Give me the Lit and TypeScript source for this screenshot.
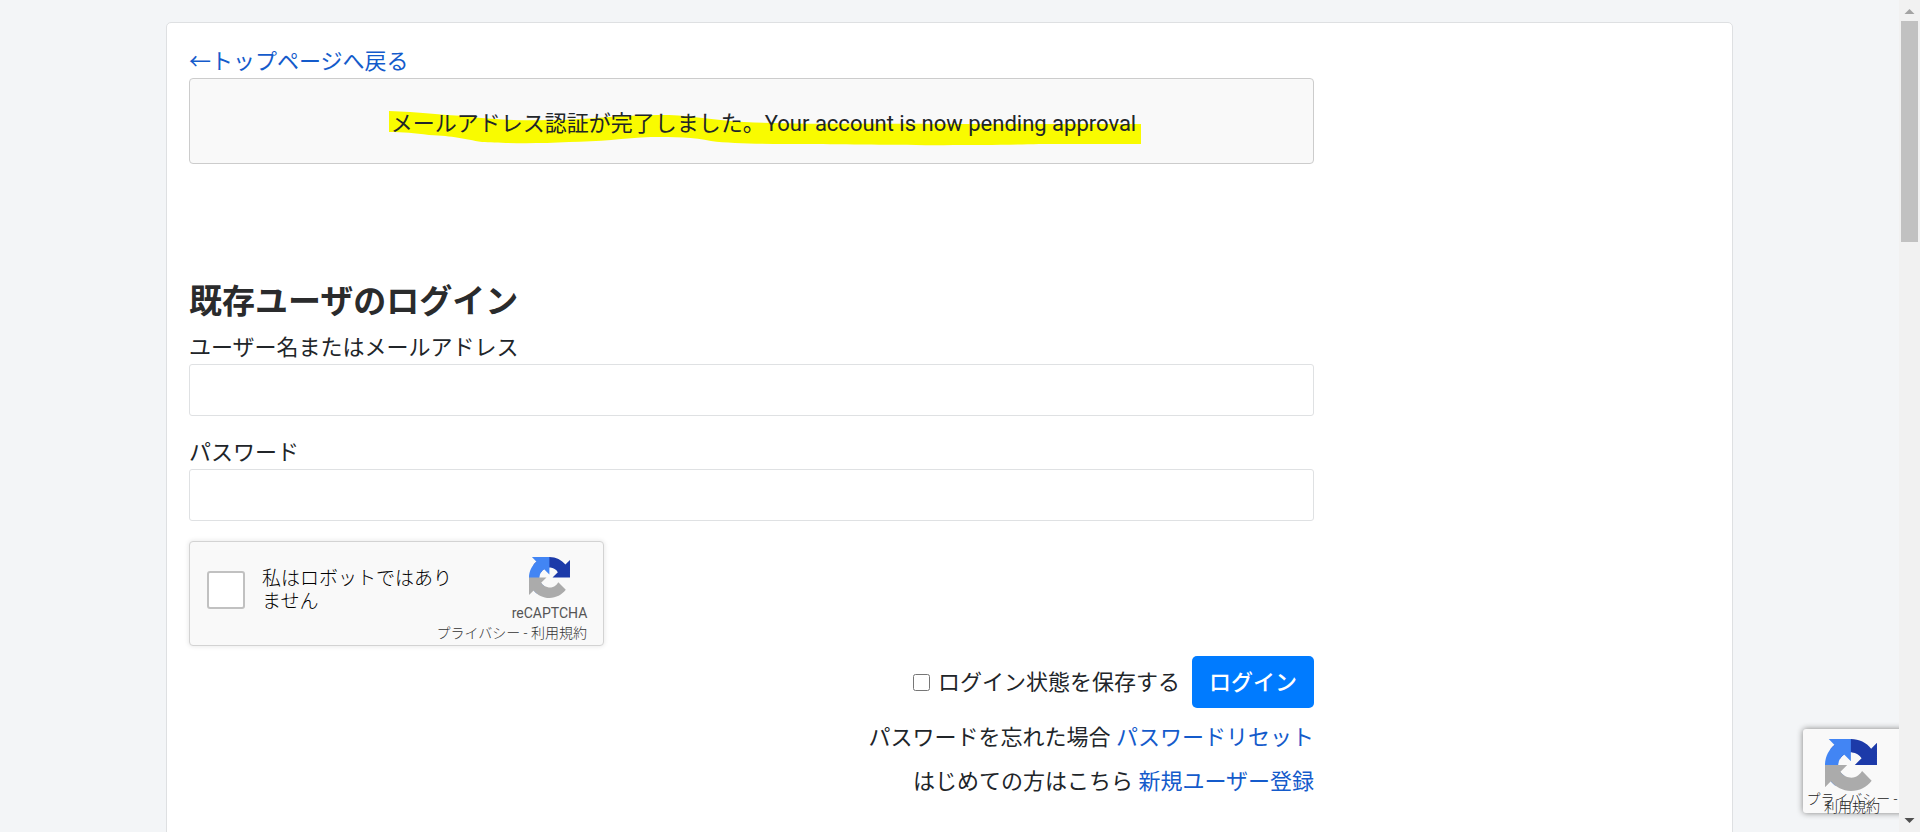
import { LitElement, html, css } from "lit";
import { customElement } from "lit/decorators.js";

@customElement("recaptcha-logo")
class RecaptchaLogo extends LitElement {
  static styles = css`
    :host { display: block; }
    svg { display: block; width: 100%; height: 100%; }
    .navy { fill: #1c3aa9; }
    .blue { fill: #4285f4; }
    .grey { fill: #ababab; }
  `;
  render() {
    return html`<svg viewBox="0 0 64 64" aria-hidden="true">
      <path class="navy" d="M64 31.955l-.033-1.37V4.687l-7.16 7.16C50.948 4.674 42.033.093 32.05.093c-10.4 0-19.622 4.96-25.458 12.64l11.736 11.86a15.55 15.55 0 0 1 4.754-5.334c2.05-1.6 4.952-2.906 8.968-2.906.485 0 .86.057 1.135.163 4.976.393 9.288 3.14 11.828 7.124l-8.307 8.307L64 31.953" />
      <path class="blue" d="M31.862.094l-1.37.033H4.594l7.16 7.16C4.58 13.147 0 22.06 0 32.046c0 10.4 4.96 19.622 12.64 25.458L24.5 45.768a15.55 15.55 0 0 1-5.334-4.754c-1.6-2.05-2.906-4.952-2.906-8.968 0-.485.057-.86.163-1.135.393-4.976 3.14-9.288 7.124-11.828l8.307 8.307L31.86.095" />
      <path class="grey" d="M.001 32.045l.033 1.37v25.898l7.16-7.16c5.86 7.173 14.774 11.754 24.76 11.754 10.392 0 19.622-4.96 25.458-12.64l-11.736-11.86a15.55 15.55 0 0 1-4.754 5.334c-2.05 1.6-4.952 2.906-8.968 2.906-.485 0-.86-.057-1.135-.163-4.976-.393-9.288-3.14-11.828-7.124l8.307-8.307c-10.522.04-22.4.066-27.295-.005" />
    </svg>`;
  }
}

@customElement("app-root")
class AppRoot extends LitElement {
  static styles = css`
    :host {
      display: block;
      box-sizing: border-box;
      height: 100vh;
      padding-bottom: 3px;
      overflow: hidden;
      background: #fff;
      font: 22px/33px Roboto, "Noto Sans CJK JP", sans-serif;
      color: #212529;
    }
    *, *::before, *::after { box-sizing: border-box; }
    .window { display: grid; grid-template-columns: 1fr 21px; height: 100%; }
    .page { position: relative; overflow: hidden; background: #f3f5f7; padding: 22px 166px 0; }
    .card {
      min-height: 120vh;
      padding: 22px;
      background: #fff;
      border: 1px solid #dee0e2;
      border-radius: 5px;
    }
    .column { max-width: 1125px; }
    a { color: #145bcb; text-decoration: none; }
    .notice {
      height: 86px;
      display: flex;
      align-items: center;
      justify-content: center;
      margin-bottom: 116px;
      padding-left: 24px;
      border: 1px solid #ccc;
      border-radius: 4px;
      background: #f9f9f9;
    }
    .marked { position: relative; padding-top: 4px; }
    .marker { position: absolute; left: -2px; top: 7px; width: 752px; height: 36px; }
    .message { position: relative; }
    h2 { margin: 0 0 7px; font-size: 33px; line-height: 44px; font-weight: 700; color: #2a2b2c; }
    .field { display: block; width: 100%; height: 52px; margin-bottom: 20px; padding: 8px 12px;
      border: 1px solid #dfe1e3; border-radius: 3px; background: #fff; font: inherit; }
    .label { display: block; }
    .captcha {
      display: grid;
      grid-template-columns: 1fr 75px;
      align-content: start;
      width: 415px;
      height: 105px;
      padding: 0 16px 0 17px;
      border: 1px solid #d3d3d3;
      border-radius: 4px;
      background: #f9f9f9;
      box-shadow: 0 0 4px 1px rgba(0, 0, 0, 0.08);
    }
    .robot { display: flex; align-items: center; gap: 17px; margin-top: 15px; height: 66px;
      font-size: 19px; line-height: 23px; font-weight: 300; color: #000; }
    .robot span { width: 196px; }
    .tick { appearance: none; width: 38px; height: 38px; margin: 0; border: 2px solid #c1c1c1; border-radius: 3px; background: #fff; }
    .brand { display: flex; flex-direction: column; align-items: center; padding-top: 15px; color: #555; font-size: 14px; line-height: 20px; }
    .brand recaptcha-logo { width: 41px; height: 41px; margin-bottom: 5px; }
    .legal { grid-column: 1 / -1; text-align: right; font-size: 14px; line-height: 20px; font-weight: 300; color: #333; }
    .legal a, .badge a { color: inherit; }
    .actions { display: flex; justify-content: flex-end; align-items: center; gap: 12px; margin: 10px 0 8px; }
    .remember { display: flex; align-items: center; gap: 8px; }
    .remember input { width: 17px; height: 17px; margin: 0; }
    .login { height: 52px; padding: 0 17px; border: 0; border-radius: 5px; background: #007bff; color: #fff; font: inherit; font-weight: 500; }
    .help { margin: 0; text-align: right; line-height: 44px; }
    .badge {
      position: absolute;
      right: -224px;
      bottom: 19px;
      width: 320px;
      height: 84px;
      padding: 10px 0 0 2px;
      border-radius: 3px;
      background: #f9f9f9;
      box-shadow: 0 0 6px #808080;
      font-size: 14px;
      line-height: 8px;
      font-weight: 300;
      color: #222;
    }
    .badge recaptcha-logo { width: 52px; height: 52px; margin: 0 0 4px 20px; }
    .badge div { width: 94px; text-align: center; }
    .scroll { display: flex; flex-direction: column; align-items: center; background: #f1f1f1; }
    .scroll svg { display: block; width: 21px; height: 21px; }
    .thumb { width: 17px; height: 221px; margin-bottom: auto; background: #c1c1c1; }
  `;

  render() {
    return html`<div class="window">
      <div class="page">
        <main class="card">
          <div class="column">
            <a href="#">←トップページへ戻る</a>
            <div class="notice" role="status">
              <div class="marked">
                <svg class="marker" viewBox="0 0 752 36" preserveAspectRatio="none" aria-hidden="true">
                  <path fill="#f9fb00" d="M0 1C30 2 52 5 75 6C105 10 135 11 160 10C200 10 235 4 280 5C305 6 325 10 355 12C430 15 480 13 560 14H752V34H650C590 36 480 35 420 34C380 34 345 34 322 31C305 27 285 27 262 27C235 28 210 32 180 32C145 34 110 33 93 32C75 29 65 26 40 25C25 23 15 22 0 22Z" />
                </svg>
                <span class="message">メールアドレス認証が完了しました。Your account is now pending approval</span>
              </div>
            </div>
            <form @submit=${(e: Event) => e.preventDefault()}>
              <h2>既存ユーザのログイン</h2>
              <label class="label" for="user">ユーザー名またはメールアドレス</label>
              <input class="field" id="user" type="text" />
              <label class="label" for="pass">パスワード</label>
              <input class="field" id="pass" type="password" />
              <div class="captcha">
                <label class="robot"><input class="tick" type="checkbox" /><span>私はロボットではありません</span></label>
                <div class="brand"><recaptcha-logo></recaptcha-logo>reCAPTCHA</div>
                <div class="legal"><a href="#">プライバシー</a> - <a href="#">利用規約</a></div>
              </div>
              <div class="actions">
                <label class="remember"><input type="checkbox" />ログイン状態を保存する</label>
                <button class="login">ログイン</button>
              </div>
              <p class="help">パスワードを忘れた場合 <a href="#">パスワードリセット</a></p>
              <p class="help">はじめての方はこちら <a href="#">新規ユーザー登録</a></p>
            </form>
          </div>
        </main>
        <aside class="badge">
          <recaptcha-logo></recaptcha-logo>
          <div><a href="#">プライバシー</a> - <a href="#">利用規約</a></div>
        </aside>
      </div>
      <div class="scroll" aria-hidden="true">
        <svg viewBox="0 0 21 21"><path fill="#a3a3a3" d="M5.500 14L10.500 9L15.500 14Z" /></svg>
        <div class="thumb"></div>
        <svg viewBox="0 0 21 21"><path fill="#505050" d="M5.500 7L10.500 12L15.500 7Z" /></svg>
      </div>
    </div>`;
  }
}
